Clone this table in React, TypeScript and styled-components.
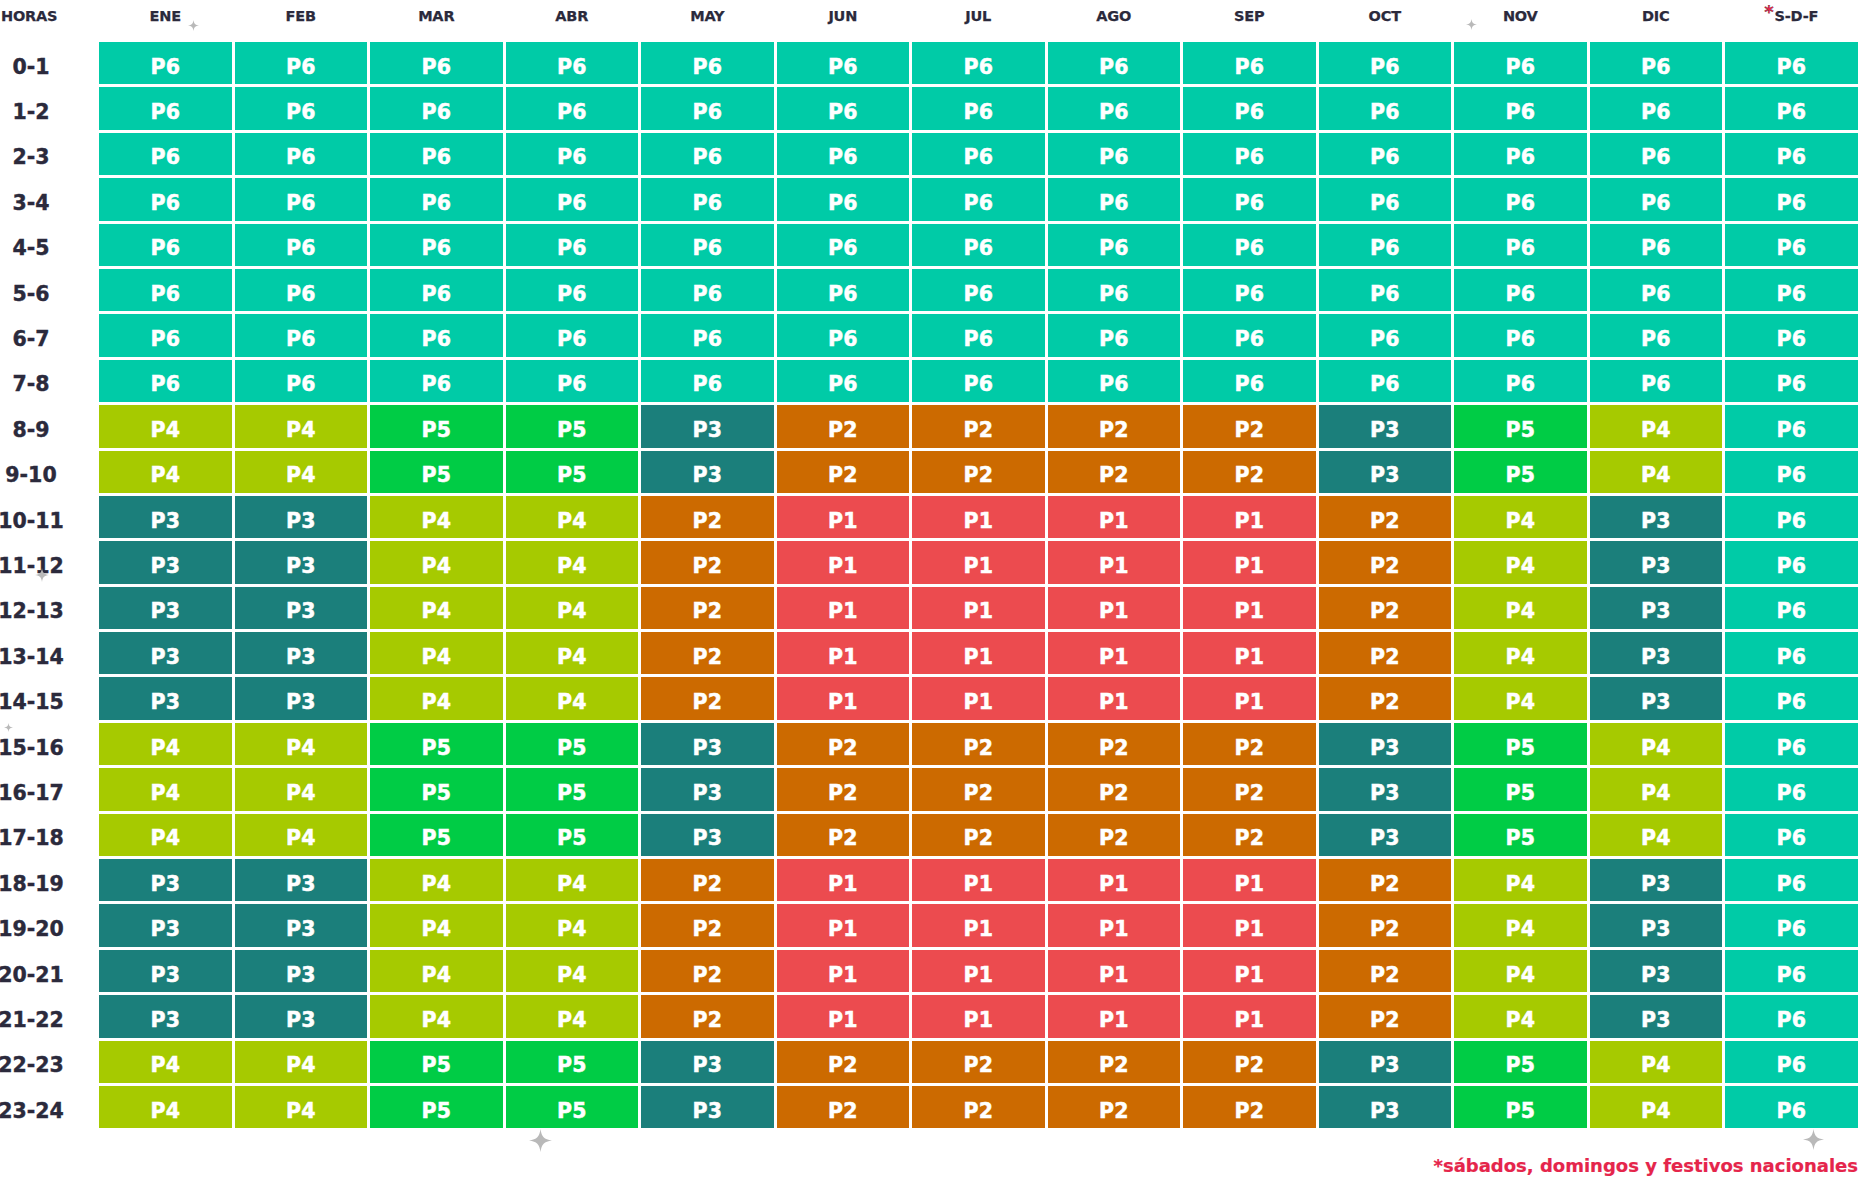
import styled, { createGlobalStyle } from "styled-components";

const GlobalStyle = createGlobalStyle`
  body {
    margin: 0;
    background: #ffffff;
    font-family: "DejaVu Sans", "Liberation Sans", sans-serif;
  }
`;

type Level = 1 | 2 | 3 | 4 | 5 | 6;

const levelColors: Record<Level, string> = {
  1: "#ec4b4f",
  2: "#cc6a00",
  3: "#1b7f7b",
  4: "#a6ca00",
  5: "#00cc45",
  6: "#00cba7",
};

const months = ["ENE", "FEB", "MAR", "ABR", "MAY", "JUN", "JUL", "AGO", "SEP", "OCT", "NOV", "DIC"];

// [mid level, top level] for each column, S-D-F last
const columnLevels: [Level, Level][] = [
  [4, 3], [4, 3], [5, 4], [5, 4], [3, 2], [2, 1],
  [2, 1], [2, 1], [2, 1], [3, 2], [5, 4], [4, 3], [6, 6],
];

function levelFor(hour: number, col: number): Level {
  if (hour < 8) return 6;
  const [mid, top] = columnLevels[col];
  if ((hour >= 10 && hour <= 14) || (hour >= 18 && hour <= 21)) return top;
  return mid;
}

const Page = styled.div`
  position: relative;
  width: 1858px;
  padding-right: 3px;
`;

const Table = styled.div`
  display: grid;
  grid-template-columns: 96px repeat(13, 132.5px);
  grid-template-rows: 39px;
  grid-auto-rows: 42.4px;
  column-gap: 3px;
  row-gap: 3px;
`;

const HeadCell = styled.div<{ $left?: boolean }>`
  align-self: start;
  height: 32px;
  display: flex;
  align-items: center;
  justify-content: ${({ $left }) => ($left ? "flex-start" : "center")};
  padding-left: ${({ $left }) => ($left ? "1px" : "0")};
  font-size: 14.5px;
  font-weight: 700;
  color: #2b2a3c;
  letter-spacing: -0.2px;
  -webkit-text-stroke: 0.25px #2b2a3c;
`;

const Star = styled.span`
  color: #ee2447;
  font-size: 18px;
  line-height: 1;
  margin-right: 1px;
  position: relative;
  top: -4px;
`;

const RowLabel = styled.div`
  display: flex;
  align-items: center;
  justify-content: center;
  padding: 7px 34px 0 0;
  font-size: 20.5px;
  font-weight: 700;
  color: #2b2a3c;
  white-space: nowrap;
  -webkit-text-stroke: 0.4px #2b2a3c;
`;

const Cell = styled.div<{ $level: Level }>`
  background: ${({ $level }) => levelColors[$level]};
  display: flex;
  align-items: center;
  justify-content: center;
  padding-top: 7px;
  color: #ffffff;
  font-size: 20.5px;
  font-weight: 700;
  -webkit-text-stroke: 0.5px #ffffff;
`;

const Footnote = styled.div`
  margin-top: 27px;
  text-align: right;
  color: #e5254b;
  font-size: 18px;
  font-weight: 700;
  -webkit-text-stroke: 0.2px #e5254b;
`;

const Sparkle = styled.svg<{ $x: number; $y: number; $size: number }>`
  position: absolute;
  left: ${({ $x, $size }) => $x - $size / 2}px;
  top: ${({ $y, $size }) => $y - $size / 2}px;
  width: ${({ $size }) => $size}px;
  height: ${({ $size }) => $size}px;
  pointer-events: none;
`;

const sparkles = [
  { x: 193, y: 25, size: 11 },
  { x: 1471, y: 24, size: 11 },
  { x: 42, y: 575, size: 14 },
  { x: 8, y: 727, size: 9 },
  { x: 540, y: 1140, size: 23 },
  { x: 1813, y: 1139, size: 21 },
];

function SparkleMark(props: { x: number; y: number; size: number }) {
  return (
    <Sparkle $x={props.x} $y={props.y} $size={props.size} viewBox="0 0 20 20">
      <path
        d="M10 0 C11 7 13 9 20 10 C13 11 11 13 10 20 C9 13 7 11 0 10 C7 9 9 7 10 0 Z"
        fill="#b9b9b9"
      />
    </Sparkle>
  );
}

export default function App() {
  const hours = Array.from({ length: 24 }, (_, i) => i);
  return (
    <Page>
      <GlobalStyle />
      <Table>
        <HeadCell $left>HORAS</HeadCell>
        {months.map((m) => (
          <HeadCell key={m}>{m}</HeadCell>
        ))}
        <HeadCell>
          <Star>*</Star>S-D-F
        </HeadCell>
        {hours.flatMap((h) => [
          <RowLabel key={`l${h}`}>{`${h}-${h + 1}`}</RowLabel>,
          ...columnLevels.map((_, c) => {
            const lvl = levelFor(h, c);
            return (
              <Cell key={`${h}-${c}`} $level={lvl}>
                P{lvl}
              </Cell>
            );
          }),
        ])}
      </Table>
      <Footnote>*sábados, domingos y festivos nacionales</Footnote>
      {sparkles.map((s, i) => (
        <SparkleMark key={i} x={s.x} y={s.y} size={s.size} />
      ))}
    </Page>
  );
}
